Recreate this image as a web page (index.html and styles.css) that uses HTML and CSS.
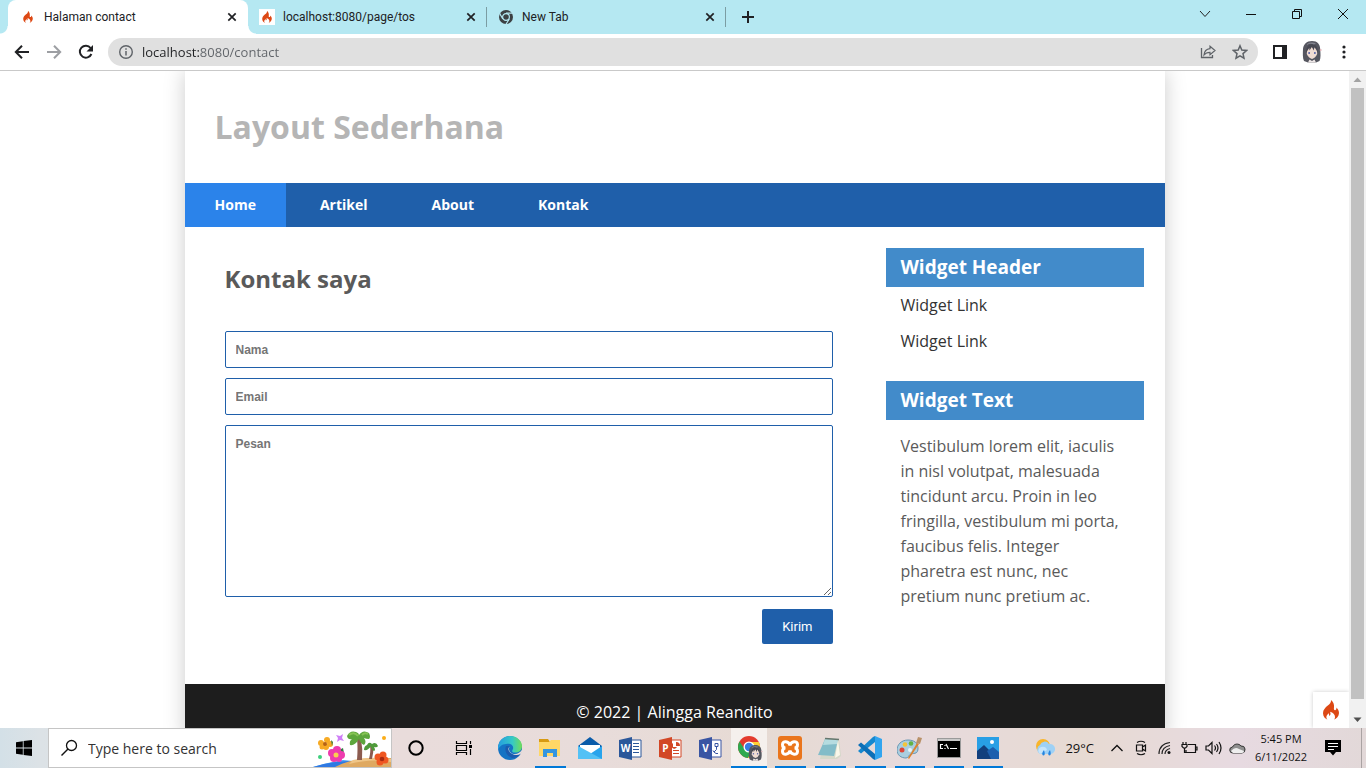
FILE: index.html
```html
<!DOCTYPE html>
<html lang="id">
<head>
<meta charset="utf-8">
<title>Halaman contact</title>
<link rel="stylesheet" href="styles.css">
</head>
<body>
<svg class="defs" aria-hidden="true">
  <symbol id="flame" viewBox="0 0 16 20"><path fill="#dd4814" d="M8 0C8.3 2.5 6.6 4 4.8 5.6 2.3 7.7 0 10 0 13.2 0 16.5 2.3 18.8 4.6 19.8 3.6 18.8 3 17.4 3.6 16 4 15 4.9 14.6 5.2 13.3 6.1 14.1 6.3 15 6 16 7.8 15.5 7.9 13.2 7 11.8 10 12.5 12 14.6 12 16.9 12 18.2 11.4 19.2 10.6 19.8 13.6 18.6 16 16.3 16 13 16 11 15 9 13.4 7.6 13.6 9 13.2 10 12.2 10.2 10.8 10.3 10.8 8.8 11 7.3 11.4 4.5 10.3 1.6 8 0Z"/></symbol>
  <symbol id="close" viewBox="0 0 10 10"><path d="M1.3 1.3l7.4 7.4M8.7 1.3l-7.4 7.4" stroke="#202124" stroke-width="1.7"/></symbol>
  <symbol id="avatar" viewBox="0 0 20 22">
    <path fill="#55565f" d="M10 0C4.500 0 1.500 3.500 1 8 .8 12 .5 17 2 20L6 21.500H14L17.500 20C19 17 18.500 12 18.200 8 18 3.500 15.500 0 10 0Z"/>
    <path fill="#f0dcd2" d="M5 8Q10 4 15 8L15.200 13Q13.500 17 10 18 6.500 17 4.800 13Z"/>
    <path fill="#474852" d="M4 12C4 6 6.500 3 10 3s6 3 6 9L14 8.500 12.500 6 11.800 9.500 9.800 6 7.500 9.500 7.200 7Z"/>
    <path fill="#6a72ad" d="M6.300 11h1.700v2h-1.700zM12 11h1.700v2h-1.700z"/>
    <path fill="#eee7e7" d="M7.500 18.500L10 20l2.500-1.500 1.500 3H6Z"/><path fill="#83858f" d="M5 3Q9 .5 14 2.500L12 3.500Q8 2 5 4Z"/><circle cx="18.700" cy="9" r="1" fill="#e3b5bb"/>
  </symbol>
</svg>

<header class="browser">
  <div class="tabstrip">
    <div class="tab tab-active"><svg class="favicon"><use href="#flame"/></svg><span class="tab-title">Halaman contact</span><button class="tab-close" aria-label="Tutup tab"><svg><use href="#close"/></svg></button></div>
    <div class="tab"><svg class="favicon favicon-white"><use href="#flame"/></svg><span class="tab-title">localhost:8080/page/tos</span><button class="tab-close" aria-label="Tutup tab"><svg><use href="#close"/></svg></button></div>
    <div class="tab"><svg class="favicon favicon-chrome" viewBox="0 0 16 16"><circle cx="8" cy="8" r="7" fill="#3c4043"/><circle cx="8" cy="8" r="3.400" fill="#3c4043" stroke="#b5e8f2" stroke-width="1.200"/><path d="M8 4.200H15M4.800 10L1.600 4.300M11.300 10L7.800 15.500" stroke="#b5e8f2" stroke-width="1.200"/></svg><span class="tab-title">New Tab</span><button class="tab-close" aria-label="Tutup tab"><svg><use href="#close"/></svg></button></div>
    <button class="new-tab" aria-label="Tab baru"><svg width="14" height="14" viewBox="0 0 14 14"><path d="M7 1v12M1 7h12" stroke="#202124" stroke-width="2"/></svg></button>
    <div class="window-controls">
      <button aria-label="Cari tab"><svg width="12" height="12" viewBox="0 0 12 12"><path d="M1 3l5 5.500L11 3" stroke="#222"/></svg></button>
      <button aria-label="Minimalkan"><svg width="12" height="12" viewBox="0 0 12 12"><path d="M1 6.500h10" stroke="#111"/></svg></button>
      <button aria-label="Pulihkan"><svg width="12" height="12" viewBox="0 0 12 12"><path d="M1.500 3.500h7v7h-7zM3.500 3.500v-2h7v7h-2" stroke="#111"/></svg></button>
      <button aria-label="Tutup"><svg width="12" height="12" viewBox="0 0 12 12"><path d="M1 1l10 10M11 1L1 11" stroke="#111"/></svg></button>
    </div>
  </div>
  <div class="toolbar">
    <button class="tool" aria-label="Kembali"><svg width="16" height="16" viewBox="0 0 16 16"><path d="M15 8H2M8 1.700L1.800 8 8 14.300" stroke="#202124" stroke-width="2"/></svg></button>
    <button class="tool" aria-label="Maju"><svg width="16" height="16" viewBox="0 0 16 16"><path d="M1 8h13M8 1.700L14.200 8 8 14.300" stroke="#9d9fa3" stroke-width="2"/></svg></button>
    <button class="tool" aria-label="Muat ulang"><svg width="16" height="16" viewBox="0 0 16 16"><path d="M13.400 10A6 6 0 1 1 12.600 4" stroke="#202124" stroke-width="2"/><path d="M15 1v6.500H8.500Z" fill="#202124"/></svg></button>
    <div class="omnibox">
      <svg width="16" height="16" viewBox="0 0 16 16"><circle cx="8" cy="8" r="6.300" stroke="#5f6368" stroke-width="1.400"/><path d="M8 7v4.500M8 4.300v1.500" stroke="#5f6368" stroke-width="1.500"/></svg>
      <input class="url" type="text" aria-label="Alamat" value="localhost:8080/contact">
      <button class="tool" aria-label="Bagikan"><svg width="16" height="16" viewBox="0 0 16 16"><path d="M1.500 4v9.500h11V11" stroke="#5f6368" stroke-width="1.300"/><path d="M10 2.200l5 4.300-5 4.200V8.300C7 8.300 5.500 9 4 11 4.300 7.500 6.200 5 10 4.600Z" stroke="#5f6368" stroke-width="1.200"/></svg></button>
      <button class="tool" aria-label="Tandai"><svg width="16" height="16" viewBox="0 0 16 16"><path d="M8 1.800l1.800 4.300 4.700.4-3.500 3.100 1 4.600L8 11.800l-4 2.400 1-4.600L1.500 6.500l4.700-.4Z" stroke="#5f6368" stroke-width="1.500"/></svg></button>
    </div>
    <button class="tool" aria-label="Panel samping"><svg width="14" height="14" viewBox="0 0 14 14"><path fill="#202124" fill-rule="evenodd" d="M0 0h14v14H0zM2 2v10h7V2z"/></svg></button>
    <button class="tool" aria-label="Profil"><svg width="20" height="22"><use href="#avatar"/></svg></button>
    <button class="tool" aria-label="Menu"><svg width="4" height="14" viewBox="0 0 4 14"><g fill="#202124"><circle cx="2" cy="2" r="1.600"/><circle cx="2" cy="7" r="1.600"/><circle cx="2" cy="12" r="1.600"/></g></svg></button>
  </div>
</header>

<div class="viewport">
  <div class="canvas">
    <div class="container">
      <header class="site-header"><h1>Layout Sederhana</h1></header>
      <nav class="site-nav"><a class="active" href="#">Home</a><a href="#">Artikel</a><a href="#">About</a><a href="#">Kontak</a></nav>
      <div class="wrapper">
        <main class="content">
          <h2>Kontak saya</h2>
          <form class="contact-form">
            <input class="field" type="text" placeholder="Nama" aria-label="Nama">
            <input class="field" type="email" placeholder="Email" aria-label="Email">
            <textarea class="field message" placeholder="Pesan" aria-label="Pesan"></textarea>
            <button class="send" type="submit">Kirim</button>
          </form>
        </main>
        <aside class="sidebar">
          <section class="widget">
            <h3>Widget Header</h3>
            <ul><li><a href="#">Widget Link</a></li><li><a href="#">Widget Link</a></li></ul>
          </section>
          <section class="widget">
            <h3>Widget Text</h3>
            <p>Vestibulum lorem elit, iaculis in nisl volutpat, malesuada tincidunt arcu. Proin in leo fringilla, vestibulum mi porta, faucibus felis. Integer pharetra est nunc, nec pretium nunc pretium ac.</p>
          </section>
        </aside>
      </div>
      <footer class="site-footer">© 2022 | Alingga Reandito</footer>
    </div>
    <button class="debug" aria-label="Debug"><svg width="16" height="20"><use href="#flame"/></svg></button>
  </div>
  <div class="scrollbar">
    <svg class="arrow" viewBox="0 0 17 17"><path d="M4.500 11L8.500 6.500 12.500 11Z" fill="#a3a3a3"/></svg>
    <div class="track"><div class="thumb"></div></div>
    <svg class="arrow" viewBox="0 0 17 17"><path d="M4.500 6.500L8.500 11 12.500 6.500Z" fill="#505050"/></svg>
  </div>
</div>

<div class="taskbar">
  <button class="task wide" aria-label="Start"><svg width="16" height="16" viewBox="0 0 16 16"><path fill="#000" d="M0 2.200L6.800 1.200V7.600H0zM7.600 1.100L16 0V7.600H7.600zM0 8.400H6.800V14.800L0 13.800zM7.600 8.400H16V16L7.600 14.900z"/></svg></button>
  <label class="search">
    <svg width="18" height="18" viewBox="0 0 18 18"><circle cx="11.500" cy="6.500" r="5" stroke="#111" stroke-width="1.300"/><path d="M8 10L1.500 16.500" stroke="#111" stroke-width="1.500"/></svg>
    <input type="text" placeholder="Type here to search" aria-label="Type here to search">
    <svg class="art" width="78" height="38" viewBox="0 0 78 38">
      <path d="M0 38Q12 34 30 31L50 33 52 38Z" fill="#4aa3f5"/><path d="M0 38Q18 32 40 32L46 38Z" fill="#2f79e2"/><path d="M22 38Q42 27 78 29V38Z" fill="#dfa961"/><path d="M40 31Q58 27 78 30V33Q58 29 36 35Z" fill="#efc587"/>
      <path d="M44 31Q45 19 44 10H48Q50 20 49 31ZM56 30Q58 22 57 17H60Q61 23 59 30Z" fill="#8c5b4f"/>
      <path d="M46 10Q42 17 37 16 36 12 39 10 35 11 34 7 37 1 43 3 46 4 46 6 50 0 56 4 58 8 56 10 53 10 51 9 54 13 51 16 47 14 46 10Z" fill="#5da63c"/><path d="M58 17Q55 22 51 21 51 17 54 16 56 12 59 15 63 12 65 17 64 19 61 18 63 21 61 22 58 21 58 17Z" fill="#4f9a3a"/>
      <path d="M36 6q5-4 9 1M49 6q3-3 6-1" stroke="#86c354" stroke-width="2"/>
      <g fill="#f7aa24"><circle cx="8" cy="14" r="3"/><circle cx="14" cy="11" r="3"/><circle cx="17" cy="15" r="3"/><circle cx="13" cy="18" r="3"/><circle cx="9" cy="18" r="2.500"/></g><circle cx="12" cy="15" r="2" fill="#b76313"/>
      <path d="M26 21l4-2 1 5-3 3ZM18 11l2 2-1 4Z" fill="#397b46"/>
      <g fill="#ee3cae"><circle cx="19" cy="24" r="4"/><circle cx="24" cy="21" r="4"/><circle cx="28" cy="26" r="4"/><circle cx="21" cy="29" r="4"/><circle cx="26" cy="30" r="3"/></g><circle cx="23" cy="26" r="2.500" fill="#f9d14f"/>
      <g fill="#ef5722"><circle cx="65" cy="28" r="3.500"/><circle cx="70" cy="26" r="3.500"/><circle cx="72" cy="31" r="3.500"/><circle cx="67" cy="33" r="3.500"/></g><circle cx="69" cy="30" r="2.300" fill="#a92a11"/>
      <path d="M23 6l4 1 3-2-1 4 2 3-4-1-3 2 1-4Z" fill="#cf7ff6"/><circle cx="7" cy="28" r="2" fill="#3ed07c"/><circle cx="71" cy="9" r="2" fill="#fbad18"/>
    </svg>
  </label>
  <button class="task wide" aria-label="Cortana"><svg width="18" height="18" viewBox="0 0 18 18"><circle cx="9" cy="9" r="6.700" stroke="#000" stroke-width="2"/></svg></button>
  <button class="task wide" aria-label="Task View"><svg width="18" height="16" viewBox="0 0 18 16"><path d="M1.500 1v2.500h10V1M1.500 15v-2.500h10V15M1.500 5.500h10v5h-10zM15.500 1v3M15.500 9v6" stroke="#000" stroke-width="1.200"/><path d="M14 5h3v3h-3z" fill="#000"/></svg></button>
  <div class="apps">
    <button class="task" aria-label="Edge"><svg width="24" height="24" viewBox="0 0 24 24"><defs><linearGradient id="eg" x1="0" x2="1"><stop stop-color="#249de0"/><stop offset=".6" stop-color="#36c9c5"/><stop offset="1" stop-color="#70de58"/></linearGradient></defs><circle cx="12" cy="12" r="12" fill="#1473c4"/><path fill="url(#eg)" d="M0 11C1 4 6 0 12 0 19 0 24 5 24 10 24 15 20 17 16 16.500 13.500 16 14 14.500 15 13 16 9 12 7 8 8 4 8 1 11 0 14Z"/><path fill="#1b5bad" d="M8 10C6 15 9 20 14 22 18 22 21 20 22.500 18 18 20 13 19 11 15 10 13 11 11 12 10Z"/><path fill="#e9dcd8" d="M12 10.500C10 12 11 16 14 17.500 18 19 22 17 24 14V16L22.500 18C18 20 13 18.500 11 15 10 13 10.500 11.500 12 10.500Z"/></svg></button>
    <button class="task open" aria-label="File Explorer"><svg width="22" height="20" viewBox="0 0 22 20"><path d="M0 1h9l2 3H0z" fill="#d79a12"/><path d="M0 4h10l2-2h9v16H0z" fill="#ffd766"/><path d="M4 11h14v8h-4v-4H8v4H4z" fill="#3495df"/></svg></button>
    <button class="task" aria-label="Mail"><svg width="24" height="24" viewBox="0 0 24 24"><path fill="#0a5ba9" d="M0 10L12 1l12 9v4H0Z"/><path fill="#fff" d="M2 9h20v9H2z"/><path fill="#29a4ec" d="M0 10l12 8 12-8v13H0Z"/><path fill="#53c1f5" d="M0 10l24 13H0Z"/></svg></button>
    <button class="task" aria-label="Word"><svg class="office" viewBox="0 0 23 23"><path d="M10 3h12v17H10z" fill="#fff" stroke="#2b579a"/><path d="M14 6.500h6M14 9.500h6M14 12.500h6M14 15.500h6" stroke="#2b579a"/><path d="M0 3L13 0v23L0 20z" fill="#2b579a"/><text x="6.500" y="15">W</text></svg></button>
    <button class="task" aria-label="PowerPoint"><svg class="office" viewBox="0 0 23 23"><path d="M10 3h12v17H10z" fill="#fff" stroke="#d24726"/><path d="M14 13.500h6M14 16.500h6" stroke="#d24726"/><path d="M14 6a3 3 0 1 0 4 4h-4zM17 5v4h4a4 4 0 0 0-4-4" fill="#d24726"/><path d="M0 3L13 0v23L0 20z" fill="#d24726"/><text x="6.500" y="15">P</text></svg></button>
    <button class="task" aria-label="Visio"><svg class="office" viewBox="0 0 23 23"><path d="M10 3h12v17H10z" fill="#fff" stroke="#3955a3"/><path d="M16 6.500h3v3h-3zM17.500 9.500v3l-2.500 2.500-1-1.500M15 15l2 1.500h2" stroke="#3955a3"/><path d="M0 3L13 0v23L0 20z" fill="#3955a3"/><text x="6.500" y="15">V</text></svg></button>
    <button class="task open current" aria-label="Chrome"><svg width="26" height="26" viewBox="0 0 26 26"><circle cx="12" cy="12" r="11" fill="#e33b2e"/><path d="M2.500 6.500A11 11 0 0 0 11 23L16 14H7.500Z" fill="#2da94f"/><path d="M12 7h9.800A11 11 0 0 1 11 23L16 14Z" fill="#fdd032"/><circle cx="12" cy="12" r="5.500" fill="#fff"/><circle cx="12" cy="12" r="4.200" fill="#3a7de2"/><svg x="11" y="10" width="15" height="16"><use href="#avatar"/></svg></svg></button>
    <button class="task open" aria-label="XAMPP"><svg width="24" height="24" viewBox="0 0 24 24"><rect width="24" height="24" rx="3" fill="#ea751c"/><path d="M12 9.500C11 5 4.500 4.500 4.500 8.500c0 2 1 3.500 3 3.500-2 0-3 1.500-3 3.500 0 4 6.500 3.500 7.500-1 1 4.500 7.500 5 7.500 1 0-2-1-3.500-3-3.500 2 0 3-1.500 3-3.500C19.500 4.500 13 5 12 9.500Z" stroke="#fff" stroke-width="3"/></svg></button>
    <button class="task open" aria-label="Notepad"><svg width="24" height="24" viewBox="0 0 24 24"><path d="M7 2l14 1 2 17-4 3H2Z" fill="#d5d8c9"/><path d="M7 3l13 1-4 16L0 19Z" fill="#82bcc8"/><path d="M7 3l13 1-1 4-14 1Z" fill="#b5dce0"/><path d="M20 4l2 15-5 3Z" fill="#f9f7e9"/><path d="M7 2.500l14 1" stroke="#65766d" stroke-width="1.500"/></svg></button>
    <button class="task open" aria-label="VS Code"><svg width="24" height="24" viewBox="0 0 24 24"><path d="M17 0v6L3 17.500l-3-2.500L15 1Z" fill="#1688cf"/><path d="M17 24v-6L3 6.500 0 9l15 14Z" fill="#0b6fb7"/><path d="M17 0l7 3v18l-7 3z" fill="#32a5ef"/></svg></button>
    <button class="task short open" aria-label="Paint"><svg width="25" height="24" viewBox="0 0 25 24"><path d="M11 4C4 4 0 9 0 14s4 8 9 8c3 0 2-3 5-4 4-1 7 0 7-6 0-5-4-8-10-8Z" fill="#a9cee0" stroke="#6996b2"/><circle cx="5" cy="14" r="2.500" fill="#dc4539"/><circle cx="8" cy="8.500" r="2.300" fill="#f4c439"/><circle cx="14" cy="7.500" r="2.300" fill="#62b246"/><circle cx="13" cy="14" r="2" fill="#e8f4f8"/><path d="M20 7l2 1-10 15-1-1Z" fill="#dc8130"/><path d="M19 7l2-6 4 1-2 6Z" fill="#b99168"/></svg></button>
    <button class="task short open" aria-label="Command Prompt"><svg width="24" height="20" viewBox="0 0 24 20"><path d="M.5.500h23v19H.5z" fill="#000" stroke="#9a9a9a"/><path d="M1 1h22v2H1z" fill="#c9c9c9"/><path d="M6 6.500H3.500v4H6M8 7v1M8 10v1M9 6l2.500 5M13 10.500h7" stroke="#fff" stroke-width="1.200"/></svg></button>
    <button class="task short open" aria-label="Foto"><svg width="22" height="22" viewBox="0 0 22 22"><path d="M0 0h22v22H0z" fill="#289fe5"/><path d="M0 14l7-6 14 14H0Z" fill="#123f7d"/><path d="M10 14l6-4 6 5v7H14Z" fill="#1d5fae"/><circle cx="15" cy="5" r="2" fill="#fff"/></svg></button>
  </div>
  <div class="tray">
    <button class="weather"><svg width="22" height="20" viewBox="0 0 22 20"><circle cx="8" cy="8" r="7" fill="#f9b52b"/><path d="M5 16a5 5 0 0 1 0-9 5 5 0 0 1 9-1 5 5 0 1 1 2 10Z" fill="#9ed1f6"/><path d="M5 16a4 4 0 0 1 1-7q5-1 6 3Z" fill="#c6e5fb"/><path d="M9 12q-3 4-1 5.500 3 0 1-5.500M15 12q-3 4-1 5.500 3 0 1-5.500" fill="#2484df"/></svg><span>29°C</span></button>
    <button class="tray-icon" aria-label="Ikon tersembunyi"><svg width="14" height="14" viewBox="0 0 14 14"><path d="M1.500 10L7 4.500l5.500 5.500" stroke="#111" stroke-width="1.300"/></svg></button>
    <button class="tray-icon" aria-label="Kamera"><svg width="12" height="16" viewBox="0 0 12 16"><path d="M1.500 5h6v6h-6zM7.500 7l3-2v6l-3-2M2 2.500Q6 0 10 2.500M2 13.500Q6 16 10 13.500" stroke="#111" stroke-width="1.200"/></svg></button>
    <button class="tray-icon" aria-label="Jaringan"><svg width="14" height="14" viewBox="0 0 14 14"><path d="M1 13Q1 3 12 1.500M4 13Q4 6 12 4.500M7 13Q7 9 12 7.500" stroke="#222" stroke-width="1.200"/><circle cx="11" cy="11.500" r="1.500" fill="#111"/></svg></button>
    <button class="tray-icon" aria-label="Baterai"><svg width="17" height="14" viewBox="0 0 17 14"><path d="M7 3.500h7.500v8H5V9M14.500 6h1.500v3h-1.500M2 1v2M5 1v2M1 3.500h5v2L4.500 7h-2L1 5.500zM3.500 7v4.500H5" stroke="#111" stroke-width="1.200"/></svg></button>
    <button class="tray-icon" aria-label="Suara"><svg width="17" height="14" viewBox="0 0 17 14"><path d="M1 5h2.500L7 1.500v11L3.500 9H1zM9.500 4.500q2 2.500 0 5M11.500 3q3 4 0 8M14 1q4 6 0 12" stroke="#111" stroke-width="1.200"/></svg></button>
    <button class="tray-icon" aria-label="OneDrive"><svg width="17" height="12" viewBox="0 0 17 12"><path d="M4 11a3 3 0 0 1-.5-6A5 5 0 0 1 12 4a3.500 3.500 0 0 1 1 7Z" fill="#8f8f8f" stroke="#333"/><path d="M2 9q4-5 8-2l5 2q0 2-2 2H4Z" fill="#eee"/></svg></button>
    <div class="clock"><span>5:45 PM</span><span>6/11/2022</span></div>
    <button class="notify" aria-label="Notifikasi"><svg width="16" height="16" viewBox="0 0 16 16"><path d="M0 0h16v12h-5l-3 3.500L5 12H0z" fill="#000"/><path d="M3 3.500h10M3 6.500h10M3 9.500h6" stroke="#fff"/></svg></button>
    <div class="show-desktop"></div>
  </div>
</div>
</body>
</html>
```
FILE: styles.css
```css
* { box-sizing: border-box; }
body {
  margin: 0;
  height: 100vh;
  display: flex;
  flex-direction: column;
  overflow: hidden;
  font-family: "Open Sans", sans-serif;
  background: #fff;
}
button { border: 0; padding: 0; background: none; font: inherit; color: inherit; display: flex; align-items: center; justify-content: center; }
svg { fill: none; flex: none; }
.defs { position: absolute; width: 0; height: 0; }

/* Browser frame */
.browser { flex: none; border-bottom: 1px solid #c9c9c9; font: 12px Roboto, sans-serif; color: #202124; }
.tabstrip { display: flex; height: 34px; padding-left: 8px; background: #b5e8f2; }
.tab { display: flex; align-items: center; width: 239px; padding: 0 10px 0 12px; position: relative; }
.tab-active { width: 240px; background: #fff; border-radius: 8px 8px 0 0; }
.tab-active::before, .tab-active::after { content: ""; position: absolute; bottom: 0; width: 8px; height: 8px; }
.tab-active::before { right: 100%; background: radial-gradient(circle at 0 0, #b5e8f2 7px, #fff 8px); }
.tab-active::after { left: 100%; background: radial-gradient(circle at 100% 0, #b5e8f2 7px, #fff 8px); }
.tab + .tab { padding-left: 11px; }
.tab + .tab::after { content: ""; position: absolute; right: 0; top: 7px; width: 1px; height: 20px; background: #7b9da3; }
.favicon { width: 16px; height: 16px; padding: 2px; margin-right: 8px; }
.favicon-white { background: #fff; }
.favicon-chrome { padding: 0; }
.tab-title { flex: 1; white-space: nowrap; }
.tab-close { width: 12px; height: 16px; }
.tab-close svg { width: 10px; height: 10px; }
.new-tab { width: 28px; margin-left: 8px; }
.window-controls { display: flex; margin-left: auto; padding-bottom: 6px; }
.window-controls button { width: 46px; }
.toolbar { display: flex; align-items: center; height: 36px; padding: 0 6px; }
.tool { width: 32px; height: 28px; }
.omnibox { flex: 1; display: flex; align-items: center; height: 28px; margin: 0 6px; padding: 0 2px 0 10px; border-radius: 14px; background: #e0e0e0; }
.url {
  flex: 1;
  margin-left: 8px;
  padding: 0;
  border: 0;
  outline: 0;
  font: 13px "Open Sans", sans-serif;
  color: transparent;
  background: linear-gradient(90deg, #202124 58px, #5f6368 58px);
  background-clip: text;
  -webkit-background-clip: text;
}

/* Page area */
.viewport { flex: 1; min-height: 0; display: flex; }
.canvas { flex: 1; position: relative; overflow: hidden; }
.container { max-width: 980px; margin: 0 auto; background: #fff; box-shadow: 0 0 20px #ccc; color: #5a5a5a; }
.site-header { padding: 34px 30px; }
h1 { margin: 0; font-size: 32px; line-height: 44px; color: #b5b5b5; }
.site-nav { display: flex; gap: 4px; background: #1f5faa; }
.site-nav a { padding: 0 30px; font-size: 14px; line-height: 44px; font-weight: 700; color: #fff; text-decoration: none; }
.site-nav .active { background: #2b83ea; }
.wrapper { display: flex; }
.content { flex: 1; padding: 34px 32px 40px 40px; }
h2 { margin: 0 0 35px; font-size: 24px; line-height: 35px; }
.contact-form { display: flex; flex-direction: column; gap: 10px; }
.field { display: block; width: 100%; height: 37px; padding: 10px; border: 1px solid #1f5faa; border-radius: 2px; outline: 0; font: 700 12px/16px "Liberation Sans", sans-serif; background: #fff; }
.field::placeholder { color: #757575; }
.message { height: 172px; resize: vertical; }
.send { align-self: flex-end; margin-top: 2px; height: 35px; padding: 0 20px; border-radius: 2px; background: #1f5faa; color: #fff; font: 13px Roboto, sans-serif; }
.sidebar { width: 300px; padding: 21px 21px 20px; }
h3 { margin: 0; padding: 0 15px; font-size: 19px; line-height: 39px; color: #fff; background: #428bca; }
.widget + .widget { margin-top: 22px; }
.widget ul { margin: 0; padding: 0; list-style: none; }
.widget li { padding: 0 15px; line-height: 36px; }
.widget li a { color: #333; text-decoration: none; }
.widget p { margin: 0; padding: 14px 15px; line-height: 25px; }
.site-footer { padding: 16px 20px; text-align: center; line-height: 24px; color: #fff; background: #1d1d1d; }
.debug { position: absolute; right: 0; bottom: 0; width: 36px; height: 36px; background: #fff; box-shadow: 0 0 4px #ccc; }
.scrollbar { display: flex; flex-direction: column; width: 17px; background: #f1f1f1; }
.arrow { width: 17px; height: 17px; }
.track { flex: 1; padding: 0 2px; }
.thumb { height: 98%; background: #c1c1c1; }

/* Taskbar */
.taskbar { flex: none; display: flex; height: 40px; background: linear-gradient(90deg, #d3e0e7 0, #dce2e6 40px, #e9dcdb 400px, #e8dcda 600px, #e6dad3 780px, #e7dadd 920px, #e7dad2 1080px, #e7dae1 1240px, #e2d8d8 100%); }
.task { width: 40px; border-bottom: 2px solid transparent; position: relative; }
.task svg { margin-top: 2px; }
.wide { width: 48px; }
.short { width: 39px; }
.open::after { content: ""; position: absolute; left: 5px; right: 4px; bottom: -2px; height: 2px; background: #0078d7; }
.current { background: linear-gradient(90deg, transparent 1px, #f5f0ed 1px, #f5f0ed 37px, transparent 37px); }
.current::after { left: 1px; right: 3px; }
.search { display: flex; align-items: center; width: 344px; border: 1px solid #c5c5c5; background: #fff; padding-left: 11px; }
.search input { flex: 1; min-width: 0; margin-left: 10px; padding: 0; border: 0; outline: 0; font: 14px "Open Sans", sans-serif; background: none; }
.search input::placeholder { color: #333; }
.apps { display: flex; margin-left: 2px; }
.office { width: 23px; height: 23px; }
.office text { fill: #fff; font-size: 10px; font-weight: 700; text-anchor: middle; }
.tray { display: flex; margin-left: auto; font-size: 12px; color: #111; }
.weather { gap: 8px; margin-right: 11px; font-size: 13px; }
.tray-icon { width: 24px; }
.clock { width: 64px; display: flex; flex-direction: column; align-items: center; padding-top: 2px; line-height: 18px; font-size: 11px; }
.notify { width: 40px; }
.show-desktop { width: 5px; margin-left: 8px; border-left: 1px solid #aaa3a3; }
```
